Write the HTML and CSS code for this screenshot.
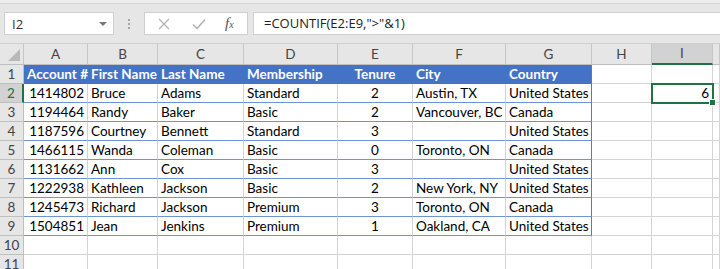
FILE: index.html
```html
<!DOCTYPE html>
<html lang="en">
<head>
    <meta charset="UTF-8">
    <title>COUNTIF - Excel</title>
    <link rel="stylesheet" href="styles.css">
</head>
<body>
    <div class="ribbon-edge"></div>
    <div class="formula-bar">
        <div class="name-box">
            <span>I2</span>
            <span class="caret"></span>
        </div>
        <div class="grip">
            <i></i><i></i><i></i>
        </div>
        <div class="fx-box">
            <svg width="14" height="14" viewBox="0 0 14 14" class="ico">
                <path d="M2 2 L12 12 M12 2 L2 12" stroke="#b4b4b4" stroke-width="1.3" fill="none"/>
            </svg>
            <svg width="16" height="14" viewBox="0 0 16 14" class="ico">
                <path d="M2 7.5 L6 11.5 L14 2.5" stroke="#b4b4b4" stroke-width="1.6" fill="none"/>
            </svg>
            <span class="fx">f<small>x</small></span>
        </div>
        <div class="formula">=COUNTIF(E2:E9,"&gt;"&amp;1)</div>
    </div>

    <table class="sheet">
        <colgroup>
            <col style="width:24px">
            <col style="width:64px">
            <col style="width:70px">
            <col style="width:86px">
            <col style="width:94px">
            <col style="width:75px">
            <col style="width:93px">
            <col style="width:86px">
            <col style="width:60px">
            <col style="width:61px">
            <col>
        </colgroup>
        <thead>
            <tr class="col-heads">
                <th class="corner"><span class="tri"></span></th>
                <th>A</th><th>B</th><th>C</th><th>D</th><th>E</th><th>F</th><th>G</th><th>H</th>
                <th class="active-col">I</th>
                <th></th>
            </tr>
        </thead>
        <tbody>
            <tr>
                <th>1</th>
                <td class="hd">Account #</td>
                <td class="hd">First Name</td>
                <td class="hd">Last Name</td>
                <td class="hd">Membership</td>
                <td class="hd c">Tenure</td>
                <td class="hd">City</td>
                <td class="hd end">Country</td>
                <td></td><td></td><td></td>
            </tr>
            <tr>
                <th class="active-row">2</th>
                <td class="t r">1414802</td><td class="t">Bruce</td><td class="t">Adams</td><td class="t">Standard</td>
                <td class="t c">2</td><td class="t">Austin, TX</td><td class="t end">United States</td>
                <td></td><td class="sel">6<span class="handle"></span></td><td></td>
            </tr>
            <tr>
                <th>3</th>
                <td class="t r">1194464</td><td class="t">Randy</td><td class="t">Baker</td><td class="t">Basic</td>
                <td class="t c">2</td><td class="t">Vancouver, BC</td><td class="t end">Canada</td>
                <td></td><td></td><td></td>
            </tr>
            <tr>
                <th>4</th>
                <td class="t r">1187596</td><td class="t">Courtney</td><td class="t">Bennett</td><td class="t">Standard</td>
                <td class="t c">3</td><td class="t"></td><td class="t end">United States</td>
                <td></td><td></td><td></td>
            </tr>
            <tr>
                <th>5</th>
                <td class="t r">1466115</td><td class="t">Wanda</td><td class="t">Coleman</td><td class="t">Basic</td>
                <td class="t c">0</td><td class="t">Toronto, ON</td><td class="t end">Canada</td>
                <td></td><td></td><td></td>
            </tr>
            <tr>
                <th>6</th>
                <td class="t r">1131662</td><td class="t">Ann</td><td class="t">Cox</td><td class="t">Basic</td>
                <td class="t c">3</td><td class="t"></td><td class="t end">United States</td>
                <td></td><td></td><td></td>
            </tr>
            <tr>
                <th>7</th>
                <td class="t r">1222938</td><td class="t">Kathleen</td><td class="t">Jackson</td><td class="t">Basic</td>
                <td class="t c">2</td><td class="t">New York, NY</td><td class="t end">United States</td>
                <td></td><td></td><td></td>
            </tr>
            <tr>
                <th>8</th>
                <td class="t r">1245473</td><td class="t">Richard</td><td class="t">Jackson</td><td class="t">Premium</td>
                <td class="t c">3</td><td class="t">Toronto, ON</td><td class="t end">Canada</td>
                <td></td><td></td><td></td>
            </tr>
            <tr>
                <th>9</th>
                <td class="t r">1504851</td><td class="t">Jean</td><td class="t">Jenkins</td><td class="t">Premium</td>
                <td class="t c">1</td><td class="t">Oakland, CA</td><td class="t end">United States</td>
                <td></td><td></td><td></td>
            </tr>
            <tr>
                <th>10</th>
                <td></td><td></td><td></td><td></td><td></td><td></td><td></td><td></td><td></td><td></td>
            </tr>
            <tr>
                <th>11</th>
                <td></td><td></td><td></td><td></td><td></td><td></td><td></td><td></td><td></td><td></td>
            </tr>
        </tbody>
    </table>
</body>
</html>
```

FILE: styles.css
```css
body {
    margin: 0;
    background: #e6e6e6;
    font-family: "Lato", "Liberation Sans", sans-serif;
    overflow: hidden;
}

/* strip above the formula bar */
.ribbon-edge {
    height: 3px;
    border-bottom: 1px solid #d4d4d4;
    background: #ededed;
}

.formula-bar {
    display: flex;
    align-items: center;
    height: 23px;
    padding: 8px 0 8px 4px;
    font-family: "Open Sans", "Noto Sans", sans-serif;
}

.name-box {
    width: 110px;
    height: 23px;
    box-sizing: border-box;
    background: #fff;
    border: 1px solid #d0d0d0;
    display: flex;
    align-items: center;
    justify-content: space-between;
    padding: 0 6px 0 7px;
    font-size: 13px;
    color: #333;
}

.caret {
    width: 0;
    height: 0;
    border-left: 4px solid transparent;
    border-right: 4px solid transparent;
    border-top: 4px solid #777;
}

.grip {
    width: 30px;
    display: flex;
    flex-direction: column;
    align-items: center;
    gap: 2px;
}

.grip i {
    width: 2px;
    height: 2px;
    background: #a6a6a6;
}

.fx-box {
    width: 104px;
    height: 23px;
    box-sizing: border-box;
    background: #fff;
    border: 1px solid #d0d0d0;
    display: flex;
    align-items: center;
    padding-left: 12px;
    gap: 20px;
}

.fx {
    font-family: "Liberation Serif", serif;
    font-style: italic;
    font-size: 15px;
    color: #555;
    margin-left: -2px;
}

.fx small {
    font-size: 10px;
}

.formula {
    flex: 1;
    height: 23px;
    box-sizing: border-box;
    margin-left: 5px;
    background: #fff;
    border: 1px solid #d0d0d0;
    border-right: none;
    padding-left: 10px;
    font-size: 13px;
    line-height: 21px;
    color: #222;
}

/* grid */
.sheet {
    table-layout: fixed;
    border-collapse: separate;
    border-spacing: 0;
    width: 720px;
    font-size: 13.5px;
    background: #fff;
}

.sheet td,
.sheet th {
    box-sizing: border-box;
    height: 19px;
    padding: 0 3px;
    line-height: 18px;
    white-space: nowrap;
    overflow: visible;
    border-right: 1px solid #d4d4d4;
    border-bottom: 1px solid #d4d4d4;
    text-align: left;
    font-weight: normal;
    color: #000;
}

.sheet th {
    background: #e6e6e6;
    text-align: center;
    color: #444;
    border-right-color: #bfbfbf;
    border-bottom-color: #bfbfbf;
    padding: 0;
}

.col-heads th {
    height: 20px;
    line-height: 19px;
    border-top: 1px solid #d0d0d0;
    border-right-color: #c6c6c6;
    border-bottom-color: #bfbfbf;
}

.corner {
    position: relative;
}

.tri {
    position: absolute;
    right: 3px;
    bottom: 3px;
    width: 0;
    height: 0;
    border-left: 12px solid transparent;
    border-bottom: 12px solid #b9b9b9;
}

.active-col {
    background: #d2d2d2 !important;
    border-bottom: 2px solid #217346 !important;
}

.active-row {
    background: #d2d2d2 !important;
    color: #2b6d43 !important;
    border-right: 2px solid #217346 !important;
}

/* excel table */
.hd {
    background: #4472c4;
    color: #fff !important;
    font-weight: bold !important;
    border-right-color: #4472c4 !important;
    border-bottom-color: #4472c4 !important;
}

.t {
    border-bottom-color: #6f93d3 !important;
}

.end {
    border-right: 1px solid #4f7bc8 !important;
}

.r {
    text-align: right !important;
}

.c {
    text-align: center !important;
}

.sel {
    position: relative;
    text-align: right !important;
    outline: 2px solid #217346;
    outline-offset: -1px;
}

.handle {
    position: absolute;
    right: -4px;
    bottom: -4px;
    width: 5px;
    height: 5px;
    background: #217346;
    border: 1px solid #fff;
}
```
